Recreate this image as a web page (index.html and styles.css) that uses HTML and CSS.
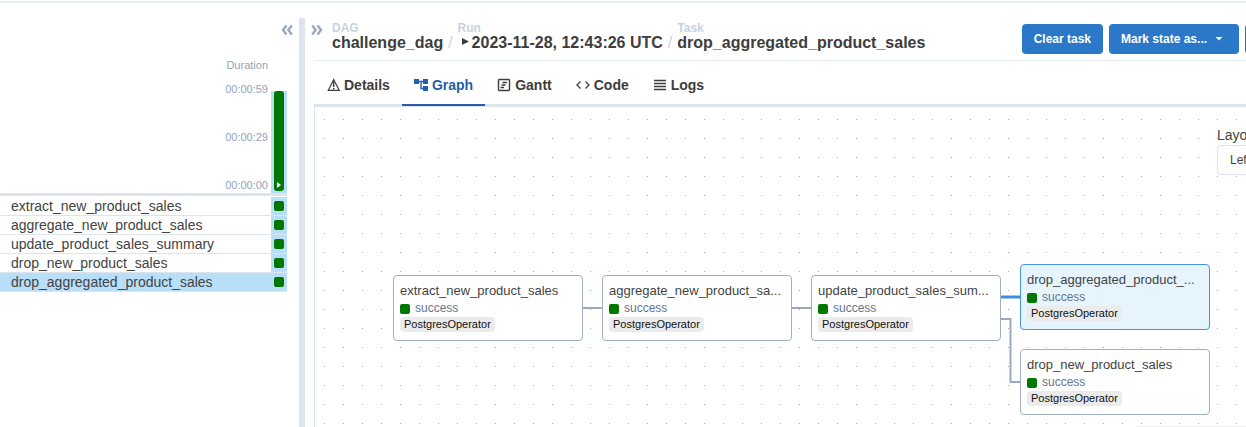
FILE: index.html
```html
<!DOCTYPE html>
<html lang="en">
<head>
<meta charset="utf-8">
<title>challenge_dag - Airflow</title>
<link rel="stylesheet" href="styles.css">
</head>
<body>
<div class="page">
  <aside class="grid-panel">
    <div class="grid-tools">
      <button class="chevron" aria-label="Collapse grid"><svg width="12" height="12" viewBox="0 0 12 12"><path d="M5.500 1.500 2 6l3.500 4.500M10.800 1.500 7.300 6l3.500 4.500"/></svg></button>
    </div>
    <div class="durations">
      <div class="scale">
        <span>Duration</span>
        <div class="ticks"><span>00:00:59</span><span>00:00:29</span><span>00:00:00</span></div>
      </div>
      <div class="run-column">
        <button class="run-bar" aria-label="Run 2023-11-28, 12:43:26 UTC"><svg width="6" height="6" viewBox="0 0 6 6"><path d="M1 0 5 3 1 6Z" fill="#fff"/></svg></button>
      </div>
    </div>
    <table class="tasks">
      <tbody>
        <tr><td>extract_new_product_sales</td><td class="state"><i class="square"></i></td></tr>
        <tr><td>aggregate_new_product_sales</td><td class="state"><i class="square"></i></td></tr>
        <tr><td>update_product_sales_summary</td><td class="state"><i class="square"></i></td></tr>
        <tr><td>drop_new_product_sales</td><td class="state"><i class="square"></i></td></tr>
        <tr class="selected"><td>drop_aggregated_product_sales</td><td class="state"><i class="square"></i></td></tr>
      </tbody>
    </table>
  </aside>
  <div class="divider"></div>
  <main class="detail">
    <header class="detail-head">
      <button class="chevron" aria-label="Expand details"><svg width="12" height="12" viewBox="0 0 12 12"><path d="M1.200 1.500 4.700 6l-3.500 4.500M6.500 1.500 10 6l-3.500 4.500"/></svg></button>
      <nav class="crumbs" aria-label="Breadcrumb">
        <a href="#dag"><small>DAG</small><b>challenge_dag</b></a>
        <span class="slash">/</span>
        <a href="#run"><small>Run</small><b><svg width="14" height="12" viewBox="0 0 14 12"><path d="M4 1 11 4.500 4 8Z" fill="#3d3d3d"/></svg>2023-11-28, 12:43:26 UTC</b></a>
        <span class="slash">/</span>
        <a href="#task"><small>Task</small><b>drop_aggregated_product_sales</b></a>
      </nav>
      <div class="actions">
        <button class="btn">Clear task</button>
        <button class="btn mark">Mark state as...<svg width="8" height="4" viewBox="0 0 8 4"><path d="M.5 0h7L4 3.500Z" fill="#fff"/></svg></button>
        <button class="btn filter" aria-label="Filter tasks"></button>
      </div>
    </header>
    <nav class="tabs" aria-label="Task views">
      <a href="#details"><svg width="14" height="14" viewBox="0 0 14 14"><path d="M7.700 1.500 2.300 12.300h10.900L7.700 1.500Z" fill="none" stroke="currentColor" stroke-width="1.200"/><path d="M7.700 3.500v5.500M7.700 10v1.500" stroke="currentColor" stroke-width="1.500"/></svg>Details</a>
      <a href="#graph" class="active"><svg width="14" height="14" viewBox="0 0 14 14"><path d="M0 1h5v5H0ZM9 1h5v5H9ZM9 8h5v5H9Z" fill="currentColor"/><path d="M5 3.500h4M7 3.500v7h2" fill="none" stroke="currentColor" stroke-width="1.400"/></svg>Graph</a>
      <a href="#gantt"><svg width="14" height="14" viewBox="0 0 14 14"><rect x="1.500" y="1.500" width="11" height="11" rx="1" fill="none" stroke="currentColor" stroke-width="1.400"/><path d="M5.500 4.500H10M4.500 7h4M3.500 9.500H7" stroke="currentColor" stroke-width="1.300"/></svg>Gantt</a>
      <a href="#code"><svg width="14" height="14" viewBox="0 0 14 14"><path d="M4.500 3.500 1 7l3.500 3.500M9.500 3.500 13 7l-3.500 3.500" fill="none" stroke="currentColor" stroke-width="1.300"/></svg>Code</a>
      <a href="#logs"><svg width="14" height="14" viewBox="0 0 14 14"><path d="M1 2.500h12M1 5.500h12M1 8.500h12M1 11.500h12" stroke="currentColor" stroke-width="1.500"/></svg>Logs</a>
    </nav>
    <section class="canvas" aria-label="Task graph">
      <svg class="edges" width="900" height="320" viewBox="0 0 900 320"><path d="M267 201h20M476 201h20M685 212h10.500v63h10"/><path class="hot" d="M685 190h21"/></svg>
      <article class="node extract"><h3>extract_new_product_sales</h3><p><i class="square"></i>success</p><span class="operator">PostgresOperator</span></article>
      <article class="node aggregate"><h3>aggregate_new_product_sa...</h3><p><i class="square"></i>success</p><span class="operator">PostgresOperator</span></article>
      <article class="node update"><h3>update_product_sales_sum...</h3><p><i class="square"></i>success</p><span class="operator">PostgresOperator</span></article>
      <article class="node drop-aggregated"><h3>drop_aggregated_product_...</h3><p><i class="square"></i>success</p><span class="operator">PostgresOperator</span></article>
      <article class="node drop-new"><h3>drop_new_product_sales</h3><p><i class="square"></i>success</p><span class="operator">PostgresOperator</span></article>
      <div class="layout-control">
        <label for="layout">Layout:</label>
        <select id="layout"><option>Left -&gt; Right</option></select>
      </div>
      <div class="minimap"></div>
    </section>
  </main>
</div>
</body>
</html>
```
FILE: styles.css
```css
* { box-sizing: border-box; }
body {
  margin: 0;
  background: #fff;
  color: #434343;
  font: 14px/18px "Liberation Sans", Arial, sans-serif;
}
button { border: 0; font: inherit; cursor: pointer; }
a { color: inherit; text-decoration: none; }
svg { flex: none; }

.page {
  display: flex;
  height: 100vh;
  padding-top: 18px;
  overflow: hidden;
  background: linear-gradient(#e9eef3, #e9eef3) 0 1px / 100% 2px no-repeat;
}
.chevron { display: flex; padding: 0; background: none; }
.chevron path { fill: none; stroke: #98a7bd; stroke-width: 2.4; }

.grid-panel { flex: none; width: 299px; padding-right: 12px; }
.grid-tools { display: flex; justify-content: flex-end; height: 40px; margin-right: -6px; padding-top: 6px; }
.durations { display: flex; height: 138px; border-bottom: 3px solid #dde4ee; }
.scale {
  display: flex;
  flex: 1;
  flex-direction: column;
  gap: 9px;
  padding-right: 3px;
  color: #94a3b8;
  font-size: 11px;
  line-height: 15px;
  text-align: right;
}
.ticks { display: flex; flex: 1; flex-direction: column; justify-content: space-between; }
.run-column { width: 16px; margin-top: 33px; padding: 0 3px 2px; background: #b8dff7; }
.run-bar {
  display: flex;
  align-items: flex-end;
  justify-content: center;
  width: 100%;
  height: 100%;
  padding: 0 0 3px;
  border-radius: 3px;
  background: #007800;
}
.square { display: block; flex: none; width: 10px; height: 10px; border-radius: 2px; background: #007800; }

.tasks { width: 100%; border-spacing: 0; margin-top: 1px; }
.tasks td { height: 19px; padding: 0 0 0 11px; border-bottom: 1px solid #dde4ee; line-height: 18px; }
.tasks .state { width: 16px; padding: 0 3px; background: #b8dff7; }
.tasks .selected td { background: #b8dff7; }

.divider { flex: none; width: 6px; background: #dde4ee; }
.detail { display: flex; flex: 1; flex-direction: column; min-width: 0; padding-left: 9px; }
.detail-head { display: flex; height: 43px; border-bottom: 1px solid #e5eaf1; }
.detail-head .chevron { flex: none; align-self: flex-start; margin: 6px 9px 0 -3px; }
.crumbs { display: flex; flex: 1; gap: 5px; padding-top: 4px; white-space: nowrap; }
.crumbs a { display: flex; flex-direction: column; }
.crumbs small { color: #c8d2df; font-size: 12px; font-weight: bold; line-height: 13px; }
.crumbs b { display: flex; align-items: center; font-size: 16px; line-height: 16px; color: #3d3d3d; }
.slash { align-self: flex-end; margin-bottom: 8px; color: #c8d2df; font-size: 16px; }
.actions { display: flex; flex: none; gap: 6px; margin-right: -39px; padding-top: 6px; }
.btn {
  display: flex;
  align-items: center;
  justify-content: center;
  gap: 8px;
  height: 30px;
  padding: 0 12px;
  border-radius: 4px;
  background: #2b77c8;
  color: #fff;
  font-size: 12px;
  font-weight: bold;
}
.mark { justify-content: flex-start; width: 130px; }
.filter { width: 40px; }

.tabs { display: flex; height: 46px; border-bottom: 3px solid #dde4ee; font-weight: bold; color: #3d3d3d; }
.tabs a { display: flex; align-items: center; gap: 4px; height: 45px; padding: 5px 12px 0; border-bottom: 2px solid transparent; }
.tabs .active { border-color: #255faa; color: #255faa; }

.canvas {
  position: relative;
  flex: 1;
  overflow: hidden;
  border-left: 1px solid #dde4ee;
  background: conic-gradient(from 270deg at 1px 1px, #aaa 90deg, transparent 0) 9px 12px / 19px 19px;
}
.edges { position: absolute; top: 0; left: 0; }
.edges path { fill: none; stroke: #9aa9c0; stroke-width: 2; }
.edges .hot { stroke: #3c8dde; stroke-width: 3; }
.node {
  position: absolute;
  width: 190px;
  height: 66px;
  padding: 6px;
  border: 1px solid #a0aec4;
  border-radius: 4px;
  background: #fff;
}
.extract { left: 78px; top: 168px; }
.aggregate { left: 287px; top: 168px; }
.update { left: 496px; top: 168px; }
.drop-aggregated { left: 705px; top: 157px; border-color: #4595dd; background: #e6f4fe; }
.drop-new { left: 705px; top: 242px; }
.node h3 { margin: 0; font-size: 13px; font-weight: normal; line-height: 18px; white-space: nowrap; }
.node p { display: flex; align-items: center; gap: 5px; margin: 1px 0; color: #64748f; font-size: 12px; line-height: 15px; }
.operator { display: block; width: max-content; padding: 0 4px; border-radius: 4px; background: #ebebeb; color: #111; font-size: 11px; line-height: 15px; }

.layout-control { position: absolute; top: 19px; right: -92px; display: flex; flex-direction: column; gap: 1px; width: 121px; }
.layout-control select {
  height: 30px;
  padding: 0 12px;
  border: 1px solid #dde4ee;
  border-radius: 4px;
  background: #fff;
  color: #434343;
  font: 12px "Liberation Sans", Arial, sans-serif;
  appearance: none;
}
.minimap { position: absolute; right: 0; bottom: 0; width: 110px; height: 1px; background: #f1f1f1; }
```
